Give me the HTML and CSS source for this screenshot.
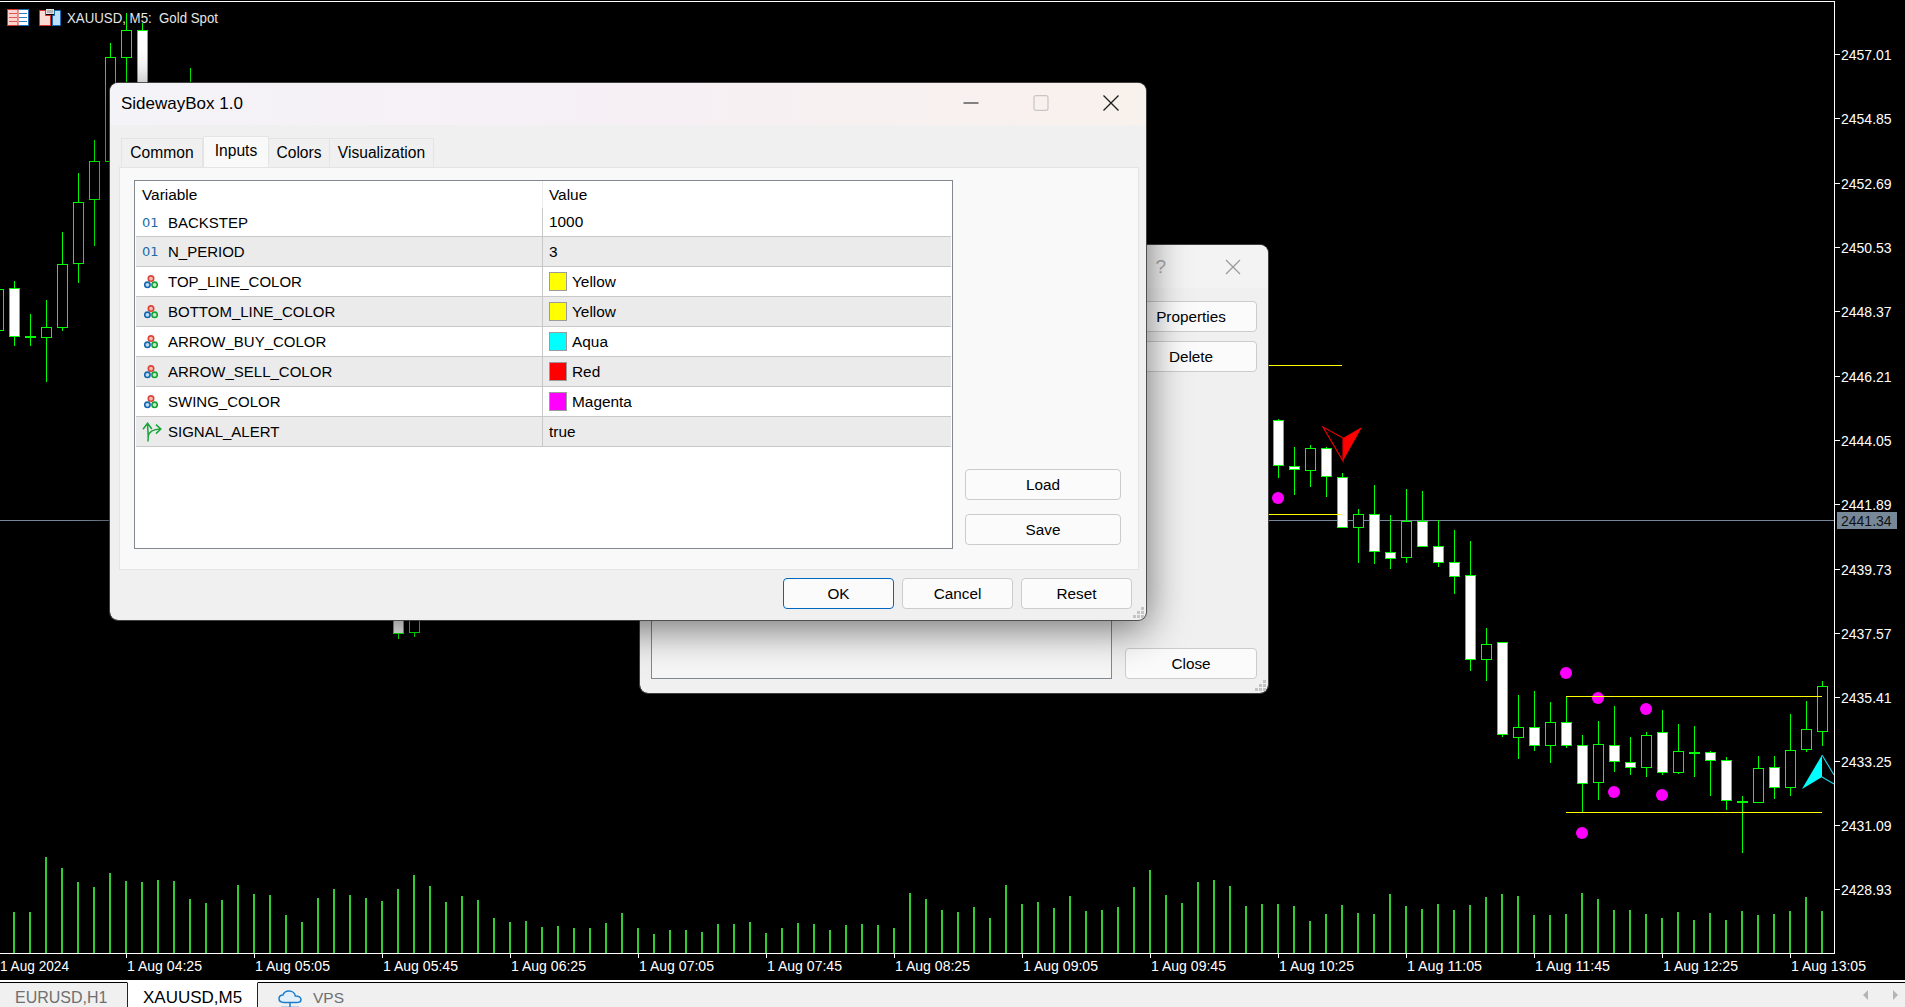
FILE: index.html
```html
<!DOCTYPE html>
<html lang="en">

<head>
    <meta charset="UTF-8">
    <meta name="viewport" content="width=device-width, initial-scale=1.0">
    <title>SidewayBox 1.0</title>

    <link rel="stylesheet" href="styles.css">
</head>

<body>
    <svg class="defs" width="0" height="0">
        <symbol id="icon-color" viewBox="0 0 14 14">
            <circle cx="7" cy="3.6" r="2.7" fill="#f6bdb7" stroke="#df4237" stroke-width="1.6" />
            <circle cx="3.4" cy="9.8" r="2.7" fill="#bfdcf3" stroke="#1567ad" stroke-width="1.6" />
            <circle cx="10.6" cy="9.8" r="2.7" fill="#c6edc9" stroke="#14a332" stroke-width="1.6" />
        </symbol>
        <symbol id="icon-bool" viewBox="0 0 20 20">
            <path d="M6 19.5C6.6 13 5.6 8 5.6 1.5M1 7.3 5.6 1.2 9.8 7M6.2 14.5C7 9 11 7.2 18.6 7M14 2.6 18.8 7 14 11.6"
                fill="none" stroke="#18a53a" stroke-width="1.5" />
        </symbol>
        <symbol id="icon-grip" viewBox="0 0 12 12">
            <path d="M8 0h3v3H8zM4 4h3v3H4zM8 4h3v3H8zM0 8h3v3H0zM4 8h3v3H4zM8 8h3v3H8z" fill="#c4c4c4" />
        </symbol>
    </svg>

    <div class="desktop">
        <div id="chart" class="chart"></div>

        <div class="tabs">
            <div class="tab">EURUSD,H1</div>
            <div class="tab tab-active">XAUUSD,M5</div>
            <div class="tab tab-vps">
                <svg class="cloud" viewBox="0 0 24 19" width="24" height="19">
                    <path d="M6 12.5C2.6 12.5 1 10.6 1 8.600C1 6.400 2.800 4.900 5 5C5.800 2.400 8.200 1 11 1C14.600 1 17 3.400 17.300 6C20.600 5.900 23 7.200 23 9.400C23 11.400 21.200 12.500 18.500 12.500Z"
                        fill="#e3f0fa" stroke="#1b7ccc" stroke-width="1.5" />
                    <path d="M12 12.500V17M3 17.500H21" fill="none" stroke="#1b7ccc" stroke-width="1.5" />
                </svg>
                VPS
            </div>
            <div class="tab tab-fill">
                <span class="arrow arrow-left"></span>
                <span class="arrow arrow-right"></span>
            </div>
        </div>

        <div class="window window-back">
            <div class="back-title">
                <span class="help">?</span>
                <svg class="close-icon" viewBox="0 0 16 16" width="16" height="16">
                    <path d="M1 1 15 15M15 1 1 15" stroke="#9a9a9a" stroke-width="1.3" />
                </svg>
            </div>
            <div class="back-body">
                <div class="back-list"></div>
                <div class="back-actions">
                    <button class="btn">Properties</button>
                    <button class="btn">Delete</button>
                    <button class="btn btn-bottom">Close</button>
                </div>
            </div>
            <svg class="grip"><use href="#icon-grip" /></svg>
        </div>

        <div class="window window-front">
            <div class="title-bar">
                <span class="title-text">SidewayBox 1.0</span>
                <div class="title-controls">
                    <svg viewBox="0 0 16 16" width="16" height="16">
                        <path d="M0.500 8H15.500" stroke="#111" stroke-width="1" />
                    </svg>
                    <svg viewBox="0 0 16 16" width="16" height="16">
                        <rect x="1" y="0.700" width="14" height="14.600" rx="2" fill="none" stroke="#c6c6c6" stroke-width="1.200" />
                    </svg>
                    <svg viewBox="0 0 16 16" width="16" height="16">
                        <path d="M0.500 0.500 15.500 15.500M15.500 0.500 0.500 15.500" stroke="#1c1c1c" stroke-width="1.300" />
                    </svg>
                </div>
            </div>

            <div class="tab-strip">
                <div class="page-tab tab-common">Common</div>
                <div class="page-tab page-tab-active tab-inputs">Inputs</div>
                <div class="page-tab tab-colors">Colors</div>
                <div class="page-tab tab-visual">Visualization</div>
            </div>

            <div class="panel">
                <div class="list">
                    <div class="list-head">
                        <div class="cell-name">Variable</div>
                        <div class="cell-value">Value</div>
                    </div>
                    <div class="list-row">
                        <div class="cell-name"><span class="icon-slot type-int">01</span>BACKSTEP</div>
                        <div class="cell-value">1000</div>
                    </div>
                    <div class="list-row list-row-alt">
                        <div class="cell-name"><span class="icon-slot type-int">01</span>N_PERIOD</div>
                        <div class="cell-value">3</div>
                    </div>
                    <div class="list-row">
                        <div class="cell-name"><span class="icon-slot"><svg class="type-color"><use href="#icon-color" /></svg></span>TOP_LINE_COLOR</div>
                        <div class="cell-value"><span class="swatch swatch-yellow"></span>Yellow</div>
                    </div>
                    <div class="list-row list-row-alt">
                        <div class="cell-name"><span class="icon-slot"><svg class="type-color"><use href="#icon-color" /></svg></span>BOTTOM_LINE_COLOR</div>
                        <div class="cell-value"><span class="swatch swatch-yellow"></span>Yellow</div>
                    </div>
                    <div class="list-row">
                        <div class="cell-name"><span class="icon-slot"><svg class="type-color"><use href="#icon-color" /></svg></span>ARROW_BUY_COLOR</div>
                        <div class="cell-value"><span class="swatch swatch-aqua"></span>Aqua</div>
                    </div>
                    <div class="list-row list-row-alt">
                        <div class="cell-name"><span class="icon-slot"><svg class="type-color"><use href="#icon-color" /></svg></span>ARROW_SELL_COLOR</div>
                        <div class="cell-value"><span class="swatch swatch-red"></span>Red</div>
                    </div>
                    <div class="list-row">
                        <div class="cell-name"><span class="icon-slot"><svg class="type-color"><use href="#icon-color" /></svg></span>SWING_COLOR</div>
                        <div class="cell-value"><span class="swatch swatch-magenta"></span>Magenta</div>
                    </div>
                    <div class="list-row list-row-alt">
                        <div class="cell-name"><span class="icon-slot"><svg class="type-bool"><use href="#icon-bool" /></svg></span>SIGNAL_ALERT</div>
                        <div class="cell-value">true</div>
                    </div>
                </div>

                <div class="panel-actions">
                    <button class="btn">Load</button>
                    <button class="btn">Save</button>
                </div>
            </div>

            <div class="footer">
                <button class="btn btn-default">OK</button>
                <button class="btn">Cancel</button>
                <button class="btn">Reset</button>
            </div>
            <svg class="grip"><use href="#icon-grip" /></svg>
        </div>
    </div>

    <script src="chart.js"></script>
</body>

</html>
```

FILE: styles.css
```css
* {
    box-sizing: border-box;
}

body {
    margin: 0;
    background-color: #000000;
    font-family: 'Liberation Sans', Arial, sans-serif;
    font-size: 15px;
    color: #000000;
    overflow: hidden;
}

.defs {
    position: absolute;
}

.desktop {
    position: relative;
    width: 1905px;
    height: 1007px;
    display: flex;
    flex-direction: column;
}

/* grafico */

.chart {
    height: 980px;
    background-color: #000000;
}

.chart svg {
    display: block;
}

.chart text {
    font-family: 'Liberation Sans', Arial, sans-serif;
    font-size: 14px;
    fill: #ffffff;
}

.chart .chart-title {
    font-size: 14px;
    fill: #e6e6e6;
    white-space: pre;
}

.chart .price-tag {
    fill: #111111;
}

/* abas de baixo */

.tabs {
    height: 27px;
    display: flex;
    border-top: 2px solid #ffffff;
    background-color: #f0f0f0;
    overflow: hidden;
}

.tab {
    display: flex;
    align-items: center;
    padding: 6px 0 0 15px;
    width: 127px;
    border-top: 1px solid #000000;
    font-size: 16px;
    color: #6f6f6f;
}

.tab-active {
    width: 131px;
    padding-left: 15px;
    background-color: #ffffff;
    border-top-color: #ffffff;
    border-left: 1px solid #222222;
    border-right: 1px solid #222222;
    font-size: 17px;
    color: #000000;
}

.tab-vps {
    width: 120px;
    padding-left: 20px;
    gap: 11px;
    font-size: 15.5px;
}

.cloud {
    margin-top: 2px;
    flex-shrink: 0;
}

.tab-fill {
    flex: 1;
    justify-content: flex-end;
    padding: 0 7px 0 0;
    gap: 25px;
}

.arrow {
    width: 0;
    height: 0;
    border-top: 5px solid transparent;
    border-bottom: 5px solid transparent;
}

.arrow-left {
    border-right: 5px solid #b4b4b4;
}

.arrow-right {
    border-left: 5px solid #b4b4b4;
}

/* janelas */

.window {
    position: absolute;
    display: flex;
    flex-direction: column;
    background-color: #f0f0f0;
    background-clip: padding-box;
    border: 1px solid rgba(70, 70, 70, 0.9);
    border-radius: 9px;
}

.window-front {
    left: 109px;
    top: 82px;
    width: 1038px;
    height: 539px;
    box-shadow: 0 8px 40px rgba(0, 0, 0, 0.55);
}

.window-back {
    left: 639px;
    top: 244px;
    width: 630px;
    height: 450px;
}

.grip {
    position: absolute;
    right: 1px;
    bottom: 1px;
    width: 12px;
    height: 12px;
}

.btn {
    height: 31px;
    padding: 0;
    background-color: #fbfbfb;
    border: 1px solid #cccccc;
    border-radius: 4px;
    font-family: inherit;
    font-size: 15.3px;
    color: #000000;
}

.btn-default {
    border-color: #0067c0;
}

/* janela de tras */

.back-title {
    height: 43px;
    display: flex;
    justify-content: flex-end;
    align-items: center;
    gap: 59px;
    padding-right: 27px;
    background-color: #f3f3f3;
    border-radius: 8px 8px 0 0;
}

.help {
    font-size: 19px;
    color: #a8a8a8;
}

.close-icon {
    margin-top: 1px;
}

.back-body {
    flex: 1;
    display: flex;
    gap: 13px;
    padding: 13px 11px 14px 11px;
}

.back-list {
    flex: 1;
    background-color: #f6f6f6;
    border: 1px solid #828790;
}

.back-actions {
    width: 132px;
    display: flex;
    flex-direction: column;
    gap: 9px;
}

.btn-bottom {
    margin-top: auto;
}

/* janela da frente */

.title-bar {
    height: 42px;
    flex-shrink: 0;
    display: flex;
    justify-content: space-between;
    align-items: center;
    padding: 0 27px 0 11px;
    border-radius: 8px 8px 0 0;
    background: linear-gradient(90deg, #f4f3f7, #f6f0f5 50%, #f8f1ec);
}

.title-text {
    font-size: 17px;
}

.title-controls {
    display: flex;
    gap: 54px;
    margin-top: -2px;
}

.tab-strip {
    height: 31px;
    margin: 11px 0 0 11px;
    display: flex;
    align-items: flex-end;
    flex-shrink: 0;
}

.page-tab {
    height: 29px;
    display: flex;
    justify-content: center;
    align-items: center;
    background-color: #f0f0f0;
    border: 1px solid #e4e4e4;
    border-left: 0;
    border-bottom: 0;
    font-size: 15.6px;
}

.page-tab-active {
    height: 31px;
    padding-bottom: 3px;
    background-color: #f9f9f9;
    border-left: 1px solid #e4e4e4;
}

.tab-common {
    width: 82px;
    border-left: 1px solid #e4e4e4;
}

.tab-inputs {
    width: 66px;
}

.tab-colors {
    width: 61px;
}

.tab-visual {
    width: 104px;
}

.panel {
    width: 1020px;
    height: 403px;
    margin-left: 9px;
    display: flex;
    gap: 12px;
    padding: 12px 16px 20px 14px;
    background-color: #f9f9f9;
    border: 1px solid #e4e4e4;
}

.list {
    width: 819px;
    background-color: #ffffff;
    border: 1px solid #828790;
    padding: 0 1px;
}

.list-head {
    height: 27px;
    display: grid;
    grid-template-columns: 406px 1fr;
    align-items: center;
    font-size: 15.4px;
}

.list-head .cell-value {
    height: 100%;
    display: flex;
    align-items: center;
    padding-left: 6px;
    border-left: 1px solid #ebebeb;
}

.list-row {
    height: 30px;
    display: grid;
    grid-template-columns: 406px 1fr;
    border-bottom: 1px solid #c8c8c8;
}

.list-row:nth-child(2) {
    height: 29px;
}

.list-row-alt {
    background-color: #ebebeb;
}

.cell-name {
    display: flex;
    align-items: center;
    padding-left: 6px;
}

.cell-value {
    display: flex;
    align-items: center;
    padding-left: 6px;
    border-left: 1px solid #c8c8c8;
    font-size: 15.4px;
}

.icon-slot {
    width: 26px;
    display: flex;
    align-items: center;
    flex-shrink: 0;
}

.type-int {
    font-family: 'DejaVu Sans', sans-serif;
    font-size: 13px;
    color: #1a6ca8;
}

.type-color {
    width: 14px;
    height: 14px;
    margin-left: 2px;
}

.type-bool {
    width: 20px;
    height: 20px;
}

.swatch {
    width: 18px;
    height: 19px;
    margin-right: 5px;
    border: 1px solid #9b9b9b;
}

.swatch-yellow {
    background-color: #ffff00;
}

.swatch-aqua {
    background-color: #00ffff;
}

.swatch-red {
    background-color: #ff0000;
}

.swatch-magenta {
    background-color: #ff00ff;
}

.panel-actions {
    width: 156px;
    display: flex;
    flex-direction: column;
    justify-content: flex-end;
    gap: 14px;
    padding-bottom: 4px;
}

.footer {
    display: flex;
    justify-content: flex-end;
    gap: 8px;
    padding: 8px 14px 0 0;
}

.footer .btn {
    width: 111px;
}
```

FILE: chart.js
```js
const PLOT_RIGHT = 1834;
const PLOT_BOTTOM = 953;

// x, topo do pavio, topo do corpo, base do corpo, base do pavio, corpo branco
const candles = [
    [-2, 280, 289, 330, 340, 0],
    [14, 281, 288, 336, 346, 1],
    [30, 314, 336, 337, 346, 0],
    [46, 300, 327, 337, 382, 0],
    [62, 232, 264, 327, 331, 0],
    [78, 173, 202, 263, 283, 0],
    [94, 140, 161, 199, 246, 0],
    [110, 43, 57, 161, 170, 0],
    [126, 13, 30, 57, 90, 0],
    [142, 23, 30, 120, 130, 1],
    [190, 68, 90, 120, 130, 0],
    [398, 560, 590, 633, 639, 1],
    [414, 560, 590, 632, 637, 0],
    [1278, 419, 420, 465, 478, 1],
    [1294, 447, 466, 469, 495, 1],
    [1310, 445, 448, 470, 487, 0],
    [1326, 447, 448, 476, 497, 1],
    [1342, 473, 477, 527, 527, 1],
    [1358, 509, 514, 527, 563, 0],
    [1374, 485, 514, 551, 564, 1],
    [1390, 515, 552, 558, 569, 1],
    [1406, 489, 521, 557, 563, 0],
    [1422, 491, 521, 546, 546, 1],
    [1438, 520, 546, 562, 567, 1],
    [1454, 530, 562, 576, 594, 1],
    [1470, 541, 575, 659, 671, 1],
    [1486, 628, 644, 659, 681, 0],
    [1502, 642, 642, 734, 737, 1],
    [1518, 695, 727, 737, 759, 0],
    [1534, 691, 727, 745, 751, 1],
    [1550, 702, 722, 745, 763, 0],
    [1566, 696, 722, 745, 748, 1],
    [1582, 735, 745, 783, 812, 1],
    [1598, 721, 744, 782, 800, 0],
    [1614, 706, 745, 761, 772, 1],
    [1630, 737, 762, 767, 775, 1],
    [1646, 732, 735, 767, 777, 0],
    [1662, 710, 732, 772, 775, 1],
    [1678, 724, 751, 772, 774, 0],
    [1694, 726, 752, 753, 777, 0],
    [1710, 751, 752, 760, 796, 1],
    [1726, 757, 760, 800, 810, 1],
    [1742, 796, 801, 802, 853, 0],
    [1758, 756, 768, 802, 803, 0],
    [1774, 756, 767, 787, 799, 1],
    [1790, 714, 750, 787, 796, 0],
    [1806, 701, 729, 749, 752, 0],
    [1822, 681, 686, 731, 746, 0]
];

// altura das barras de volume, a partir de x = 14, de 16 em 16
const volumes = [
    41, 41, 96, 85, 71, 66, 80, 72, 71, 73, 72, 54, 50, 53, 68, 59, 58, 38, 31, 55,
    64, 58, 55, 52, 64, 78, 67, 51, 57, 53, 35, 31, 32, 26, 27, 25, 25, 30, 40, 25,
    19, 23, 23, 21, 29, 29, 31, 20, 25, 30, 29, 23, 28, 29, 28, 25, 60, 54, 43, 41,
    46, 35, 68, 49, 51, 45, 57, 42, 43, 46, 66, 83, 58, 50, 71, 73, 67, 47, 49, 49,
    47, 32, 39, 48, 40, 39, 59, 47, 44, 49, 43, 48, 56, 59, 57, 38, 38, 39, 60, 54,
    43, 43, 39, 35, 41, 33, 40, 33, 42, 38, 39, 42, 56, 42
];

const prices = [
    '2457.01', '2454.85', '2452.69', '2450.53', '2448.37', '2446.21', '2444.05',
    '2441.89', '2439.73', '2437.57', '2435.41', '2433.25', '2431.09', '2428.93'
];
const priceRows = [54, 118, 183, 247, 311, 376, 440, 504, 569, 633, 697, 761, 825, 889];

const times = [
    '04:25', '05:05', '05:45', '06:25', '07:05', '07:45', '08:25',
    '09:05', '09:45', '10:25', '11:05', '11:45', '12:25', '13:05'
];

const dots = [
    [1278, 498], [1566, 673], [1598, 698], [1646, 709], [1614, 792], [1662, 795], [1582, 833]
];

let svg = '<svg width="1905" height="980" viewBox="0 0 1905 980">';

// linha do preco atual fica por baixo das velas
svg += `<path d="M0 520.5H${PLOT_RIGHT}" stroke="#778899" shape-rendering="crispEdges" />`;

volumes.forEach((h, i) => {
    const x = 13 + i * 16;
    svg += `<rect x="${x}" y="${PLOT_BOTTOM - h}" width="2" height="${h}" fill="#32cd32" shape-rendering="crispEdges" />`;
});

candles.forEach(([x, wickTop, bodyTop, bodyBot, wickBot, white]) => {
    svg += `<g shape-rendering="crispEdges" stroke="#00ff00">`;
    svg += `<path d="M${x + 0.5} ${wickTop}V${wickBot}" />`;
    svg += `<rect x="${x - 4.5}" y="${bodyTop + 0.5}" width="10" height="${bodyBot - bodyTop}" fill="${white ? '#ffffff' : '#000000'}" />`;
    svg += '</g>';
});

dots.forEach(([x, y]) => {
    svg += `<circle cx="${x}" cy="${y}" r="6" fill="#ff00ff" />`;
});

// linhas da caixa lateral
svg += '<g stroke="#ffff00" shape-rendering="crispEdges">';
svg += '<path d="M1268 365.5H1342M1268 514.5H1342" />';
svg += '<path d="M1566 696.5H1822M1566 812.500H1822" />';
svg += '</g>';

// setas de venda e compra
svg += '<polygon points="1343,438 1362,427 1343,461" fill="#ff0000" />';
svg += '<polygon points="1343,438 1323,427 1343,461" fill="none" stroke="#e00000" stroke-width="1.200" />';
svg += '<polygon points="1822,755 1802,789 1822,777" fill="#00ffff" />';
svg += '<path d="M1822,755 1834,775M1822,777 1834,784" fill="none" stroke="#19cfe0" stroke-width="1.200" />';

// moldura e eixos
svg += `<path d="M0 1.500H${PLOT_RIGHT}.5V${PLOT_BOTTOM}.5H0" fill="none" stroke="#ffffff" shape-rendering="crispEdges" />`;

prices.forEach((p, i) => {
    const y = priceRows[i];
    svg += `<path d="M${PLOT_RIGHT} ${y}.5H1840" stroke="#ffffff" shape-rendering="crispEdges" />`;
    svg += `<text x="1841" y="${y + 5.5}">${p}</text>`;
});

svg += '<rect x="1837" y="512" width="60" height="17" fill="#778899" />';
svg += '<text class="price-tag" x="1841" y="526">2441.34</text>';

svg += '<text x="0" y="971" textLength="69" lengthAdjust="spacingAndGlyphs">1 Aug 2024</text>';
times.forEach((t, i) => {
    const x = 126 + i * 128;
    svg += `<path d="M${x}.5 ${PLOT_BOTTOM}V958" stroke="#ffffff" shape-rendering="crispEdges" />`;
    svg += `<text x="${x + 1}" y="971" textLength="75" lengthAdjust="spacingAndGlyphs">1 Aug ${t}</text>`;
});

// icones e titulo no canto do grafico
svg += '<rect x="7.500" y="9.500" width="21" height="16" fill="#ffffff" stroke="#1a6db5" />';
svg += '<rect x="7.500" y="9.500" width="10.500" height="16" fill="#f9d4d0" stroke="#d8332b" />';
svg += '<path d="M9 13.500H17M9 17.500H17M9 21.500H17" stroke="#e2564e" />';
svg += '<path d="M19 13.500H27M19 17.500H27M19 21.500H27" stroke="#2a80c4" />';
svg += '<path d="M39.500 10.500H45.500V15.500H50.500V25.500H39.500Z" fill="#fbd9d5" stroke="#d8332b" />';
svg += '<path d="M54.500 10.500H60.500V25.500H52.500V15.500H54.500Z" fill="#bfe0f7" stroke="#1a6db5" />';
svg += '<rect x="46.500" y="9.500" width="7" height="4" fill="#b5b5b5" stroke="#e2e2e2" />';
svg += '<text class="chart-title" x="67" y="23" textLength="151" lengthAdjust="spacingAndGlyphs">XAUUSD, M5:  Gold Spot</text>';

svg += '</svg>';

document.getElementById('chart').innerHTML = svg;
```
